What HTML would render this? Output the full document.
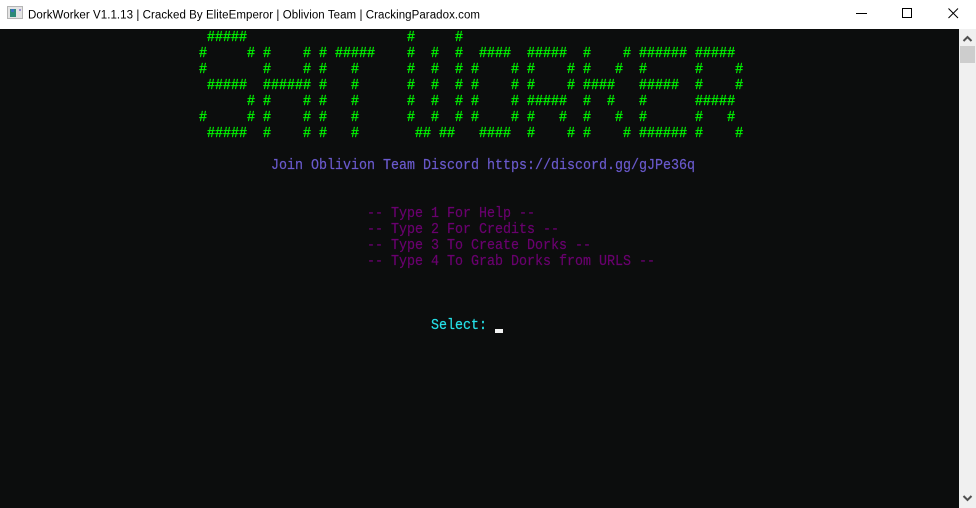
<!DOCTYPE html>
<html lang="en">
<head>
<meta charset="utf-8">
<title>DorkWorker</title>
<style>
html,body{margin:0;padding:0;width:976px;height:508px;overflow:hidden;background:#0c0d0d}
#bar{position:absolute;left:0;top:0;width:976px;height:29px;background:#fff}
#term{position:absolute;left:0;top:29px;width:959px;height:479px;background:#0c0d0d}
#sb{position:absolute;left:959px;top:29px;width:17px;height:479px;background:#f0f0f0}
#thumb{position:absolute;left:1px;top:17px;width:15px;height:17px;background:#cdcdcd}
pre{position:absolute;margin:0;font:14.5px/16px "Liberation Mono",monospace;white-space:pre;transform:scaleX(.9195);transform-origin:0 0;-webkit-text-stroke:.2px currentColor}
#art{left:199px;top:30px;color:#00f000;-webkit-text-stroke:.35px #00f000}
#join{left:271px;top:158px;color:#6a5acd}
#menu{left:367px;top:206px;color:#6a006f}
#sel{left:431px;top:318px;color:#25e0e8}
#cur{position:absolute;left:495px;top:329px;width:8px;height:4px;background:#f2f2f2}
svg{position:absolute;overflow:visible}
</style>
</head>
<body>
<div id="bar"></div>
<svg style="left:0;top:0" width="976" height="29">
<rect x="7.5" y="6.5" width="15" height="12" fill="#e4e4e4" stroke="#b5b5b5"/>
<rect x="10" y="9" width="6" height="8" fill="#2d8a78"/>
<rect x="11" y="9" width="3" height="3" fill="#3a6fc0"/>
<rect x="19" y="9" width="2" height="2" fill="#9a8fd0"/>
<text x="28" y="18.500" font-family="Liberation Sans, sans-serif" font-size="11.5" fill="#000" textLength="452" lengthAdjust="spacing">DorkWorker V1.1.13 | Cracked By EliteEmperor | Oblivion Team | CrackingParadox.com</text>
<rect x="856" y="13" width="11" height="1" fill="#000"/>
<rect x="902.500" y="8.500" width="9" height="9" fill="none" stroke="#000"/>
<path d="M948.500 8.500L958 18M958 8.500L948.500 18" stroke="#000" stroke-width="1" fill="none"/>
</svg>
<div id="term"></div>
<div id="sb"><div id="thumb"></div>
<svg style="left:0;top:0" width="17" height="479">
<path d="M4.500 12L8.500 8L12.500 12" fill="none" stroke="#505050" stroke-width="2"/>
<path d="M4.500 467L8.500 471L12.500 467" fill="none" stroke="#505050" stroke-width="2"/>
</svg>
</div>
<pre id="art"> #####                    #     #
#     # #    # # #####    #  #  #  ####  #####  #    # ###### #####
#       #    # #   #      #  #  # #    # #    # #   #  #      #    #
 #####  ###### #   #      #  #  # #    # #    # ####   #####  #    #
      # #    # #   #      #  #  # #    # #####  #  #   #      #####
#     # #    # #   #      #  #  # #    # #   #  #   #  #      #   #
 #####  #    # #   #       ## ##   ####  #    # #    # ###### #    #</pre>
<pre id="join">Join Oblivion Team Discord https://discord.gg/gJPe36q</pre>
<pre id="menu">-- Type 1 For Help --
-- Type 2 For Credits --
-- Type 3 To Create Dorks --
-- Type 4 To Grab Dorks from URLS --</pre>
<pre id="sel">Select:</pre>
<div id="cur"></div>
</body>
</html>
